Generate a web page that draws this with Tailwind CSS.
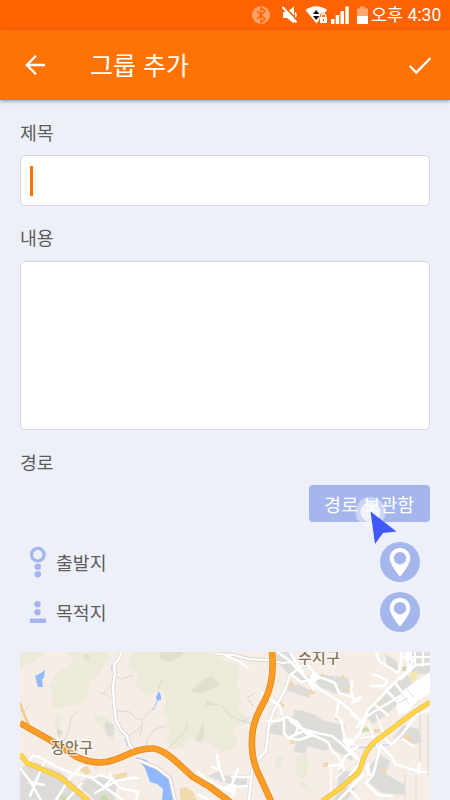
<!DOCTYPE html>
<html lang="ko">
<head>
<meta charset="utf-8">
<title>그룹 추가</title>
<script src="https://cdn.jsdelivr.net/npm/@tailwindcss/browser@4"></script>
</head>
<body class="w-[450px] h-[800px] overflow-hidden bg-[#edf0f9] font-['Noto_Sans_CJK_KR',sans-serif] text-[#5c5c5c]">
<div class="flex flex-col h-[800px]">
  <div class="h-[30px] shrink-0 bg-[#ff6200] flex items-center text-white">
    <svg class="w-[371px] h-[30px] shrink-0" viewBox="0 0 371 30" fill="none">
      <circle cx="261" cy="15" r="9" fill="#ffa167"/>
      <path d="M257 11l8 8-4 3.500V7.500l4 3.500-8 8" stroke="#ff6200" stroke-width="1.300"/>
      <path d="M283 12h4l7-5.500v17l-7-5.500h-4z" fill="#fff"/>
      <path d="M295 12.500q2 2.500 0 5" stroke="#fff" stroke-width="1.500"/>
      <path d="M284.500 6l13 15" stroke="#ff6200" stroke-width="1.800"/>
      <path d="M282.500 7l14 15.500" stroke="#fff" stroke-width="2"/>
      <path d="M305.500 10Q316 2.500 327 10L316.500 23.500z" fill="#fff"/>
      <path d="M313 14l3.200-4 3.200 4zM313 16l3.200 4 3.200-4z" fill="#111"/>
      <path d="M319.500 16.500l1-2.500q2.500-3 5 0l1.500 2.500v7h-7.500z" fill="#ff6200"/>
      <rect x="320" y="17" width="7" height="6" fill="#fff"/>
      <path d="M321.500 17v-2q2-2.500 4 0v2" stroke="#fff" stroke-width="1.300"/>
      <path d="M323 19h1v2h-1z" fill="#ff6200"/>
      <path d="M331 19h3.500v5H331zM335.700 15h3.500v9h-3.500zM340.500 11h3.500v13h-3.500zM345.300 6.500h3.500V24h-3.500z" fill="#fff"/>
      <path d="M357 8.500h3V6.500h5v2h3v8h-11z" fill="#ffa873"/>
      <path d="M357 16h11v8h-11z" fill="#fff"/>
    </svg>
    <span class="font-[Roboto,'Noto_Sans_CJK_KR',sans-serif] text-[17.500px] leading-[30px] whitespace-nowrap">오후 4:30</span>
  </div>
  <header class="h-[70px] shrink-0 bg-[#ff7305] flex items-center pl-[25px] pr-[18px] text-white shadow-[0_1px_4px_rgba(60,60,90,0.55)]">
    <svg class="w-5 h-5" viewBox="0 0 20 20" fill="none" stroke="#fff" stroke-width="2.300"><path d="M20 10H2M11 .8L1.800 10l9.200 9.200"/></svg>
    <h1 class="ml-[45px] mb-[2px] text-[25px] leading-[36px] flex-1">그룹 추가</h1>
    <svg class="w-6 h-5" viewBox="0 0 24 20" fill="none" stroke="#fff" stroke-width="2.300"><path d="M1.800 11l6.500 6.500L22.500 3"/></svg>
  </header>
  <main class="flex flex-col px-5 text-[18.300px] leading-[26px]">
    <label class="mt-[19px]">제목</label>
    <div class="mt-[10px] h-[51px] rounded-[5px] border border-[#d6d7dc] bg-white flex items-center pl-[9px]"><div class="w-[3px] h-[30px] bg-[#ff7305]"></div></div>
    <label class="mt-[18px]">내용</label>
    <div class="mt-[11px] h-[169px] rounded-[5px] border border-[#d6d7dc] bg-white"></div>
    <label class="mt-[19px]">경로</label>
    <div class="relative self-end mt-[10px] w-[121.500px] h-[37px] rounded-[4px] bg-[#a5b6ec] text-white text-[18.500px] flex items-center justify-center whitespace-nowrap">경로 보관함
      <svg class="absolute left-[46px] top-[11px] w-[44px] h-[50px]" viewBox="0 0 44 50">
        <circle cx="15.500" cy="16" r="15" fill="#fff" fill-opacity=".42"/>
        <circle cx="15.500" cy="16" r="10" fill="#fff" fill-opacity=".7"/>
        <path d="M15.500 15.500L41.500 35.500 28 37 20 48z" fill="#4059ff"/>
      </svg>
    </div>
    <div class="mt-[15px] flex items-center h-[50px] pl-[9px] pr-[10px]">
      <svg class="w-[18px] h-[50px]" viewBox="29 537 18 50" fill="#a5b6ec"><circle cx="37.800" cy="554.700" r="6.300" fill="none" stroke="#a5b6ec" stroke-width="3.200"/><circle cx="37.800" cy="566.700" r="3.200"/><circle cx="37.800" cy="574.200" r="3.300"/></svg>
      <span class="ml-[9px] flex-1">출발지</span>
      <svg class="w-10 h-10" viewBox="0 0 40 40"><circle cx="20" cy="20" r="20" fill="#a5b6ec"/><path fill="#fff" fill-rule="evenodd" d="M20 6c-6 0-10.300 4.500-10.300 10.300C9.700 22 17 31 20 34.500 23 31 30.300 22 30.300 16.300 30.300 10.500 26 6 20 6zm0 4a6.200 6.200 0 1 0 0 12.400A6.200 6.200 0 0 0 20 10z"/></svg>
    </div>
    <div class="flex items-center h-[50px] pl-[9px] pr-[10px]">
      <svg class="w-[18px] h-[50px]" viewBox="29 587 18 50" fill="#a5b6ec"><circle cx="37.500" cy="604.300" r="3.200"/><circle cx="37.500" cy="612.300" r="3.200"/><path d="M30 618.500h16v4.500H30z"/></svg>
      <span class="ml-[9px] flex-1">목적지</span>
      <svg class="w-10 h-10" viewBox="0 0 40 40"><circle cx="20" cy="20" r="20" fill="#a5b6ec"/><path fill="#fff" fill-rule="evenodd" d="M20 6c-6 0-10.300 4.500-10.300 10.300C9.700 22 17 31 20 34.500 23 31 30.300 22 30.300 16.300 30.300 10.500 26 6 20 6zm0 4a6.200 6.200 0 1 0 0 12.400A6.200 6.200 0 0 0 20 10z"/></svg>
    </div>
    <svg class="mt-[15px] w-[410px] h-[148px] shrink-0" viewBox="20 652 410 148" fill="none" stroke-linejoin="round">
      <rect x="20" y="652" width="410" height="148" fill="#f5ede6"/>
      <!-- woodland -->
      <g fill="#ecebd9">
        <path d="M20 652h26l-8 7-14 7-4 6zM65 652h42l4 4-7 9-7 12-6 5-3 10-8 13-15 1-14 3 2-14-4-8 8-15 13-6 3-9zM133 652h79l10 8 15 5 3 8-4 10 4 8 1 10-3 8 8 8 4 6-10 2-7 4 5 12-1 5-6 4-9 2-12-8-9-4-12-3-4 10-13 2-6-8 5-8-6-6 3-10-6-4 5-12-3-8-6-4-7 5-5 2-6-6-5-8 5-8-8-4-5-3zM57 712l5 5-1 8-5 4-2-7zM94 714l15 5 7 11-2 12-8-5-4-10-7-5zM275 758l8-3-2 15-6-2zM296 757l10-3 3 12-5 14-8-6zM298 780l8 3 10 13-15-8z"/>
      </g>
      <g fill="#e3dfcd"><path d="M190 692l13-12 8-4 9 9-17 8zM206 700l14 5-14 1zM195 740l9-18v14l-4 7zM84 654h5v6h-5zM160 652h24l-4 5-12 6-8-5z"/></g>
      <!-- built-up areas -->
      <g fill="#dedcd9">
        <path d="M20 768l15-6 25 10 18 15 5 13H20zM105 721l9 4v9l-5 3-4-6zM57 728l6 4-3 6-3-4zM78 784l11-7 16-1 12 4-2 20H94zM208 776l11-5 4 5 12-1 12 0v12l-10-1-17-5zM265 733l10-11 18-6 8-6 15 5 13 10 7 21-12 5-16-5-3 8-12-3 3-9-10-6-7-1zM285 687l14-3 13 8-3 6-25-9zM310 671l14 4 24 3 4 14-12 3-20-8zM293 709l32 12 20 4-2 13 12 13-3 10-24-15-28-8zM365 716l20-24 22-18 7 11-10 14-17 15-14 10zM340 770l16 2-5 11-15 9zM367 770l12-16 11 7-4 13 19 11v10l-22-2-14-10zM270 652h19l7 14 20 16-8 2-20-10zM405 652h25v22h-17zM385 654l12 7 1 10-10-2zM393 738l10-13 15 4 4 13-11 3-10-6zM343 787l13 1-9 12h-14z"/>
      </g>
      <path fill="#f0d9ae" d="M113 775l14-3v5l-11 3zM79 769l8-3 4 6-5 4zM180 788l6-1 7 5 4 8h-17zM280 702l5 2-2 4-4-1zM288 683l4-2 2 4-5 2zM347 686l6 3-3 3-4-2zM341 676l3-1v4l-3 1zM335 716h4v4h-4zM290 740h5v4h-5zM323 763l5-1v5h-5zM382 768l5 2-2 4-4-3zM404 734l7 3-1 5-5-2zM374 703l5-2 1 4-5 1zM374 729h6v4h-6zM310 689h5v5h-5zM340 790l6-1-1 5-5 1zM28 770l4 2-2 2-3-1z"/>
      <path fill="#c9dba8" d="M100 797l5-3 4 6h-8zM60 795l7 2v3h-6zM362 728l5-1 3 4-8 1zM403 666l3 1v4h-4zM318 676l6-2v5zM396 722l5-3 2 3-4 3z"/>
      <path fill="#f0e8b2" d="M410 673l7-2v8l-7 3z"/>
      <!-- water -->
      <g fill="#8fb8ff"><path d="M35 676l6-3 4-3-1 7-2 3 1 7h-5zM159 691l2 5v4l-4 1-1-4zM136 757l10 3 11 8 13 10 3 22h-11l1-11-6-5-7-2-5-14z"/></g>
      <path stroke="#b3cbf7" stroke-width="1.200" d="M157 701l-4 9M112 665v6M125 738l3 9M355 747l14 1 8-3h13M278 663h12"/>
      <!-- footpaths -->
      <g stroke="#dcd7d1" stroke-width="1">
        <path d="M77 711l-6 7-2 13-5 10-12 8M115 675l6 4 13-4M112 684l-7 8-3 3M100 692l10 5M162 679l-4 12M155 706l-13 14-7-2-5-6-10-1-4 2M142 720v6l-14 11M165 726l-10 3-8 10-1 9M142 726l-2 10M187 724l-1 6-15 16-5 4M223 706l7 10 12 5 9 2M255 693l-8 5 6 8M250 717l-8 5M33 702l-8 8-5 2M96 770v-9"/>
        <path d="M24 774l20 26M35 766l25 34M49 770l20 27M20 784l22-18M22 794l30-24M31 799l30-23M46 800l25-19M60 800l17-12M81 793l17-12M88 780l18 16"/>
      </g>
      <!-- road casings -->
      <g stroke="#ddd7d0" stroke-width="4">
        <path d="M121 652l-1 5-6 8 1 9-2 12 1 17 2 17 5 10 6 6 3 10 6 6M138 760l19 8 13 10 5 22"/>
        <path d="M218 654l16 1 14 4 18 1 17 3 16-2M303 665l-13 10-5 15-11 20-5 14-3 27-8 8-6 12-3 29"/>
      </g>
      <!-- streets -->
      <g stroke="#fff" stroke-width="2.600" stroke-linecap="round">
        <path stroke-width="2.300" d="M121 652l-1 5-6 8 1 9-2 12 1 17 2 17 5 10 6 6 3 10 6 6"/>
        <path d="M303 665l-13 10-5 15-11 20-5 14-3 27-8 8-6 12-3 29"/>
        <path stroke-width="1.900" d="M218 654l16 1 14 4 18 1 17 3 16-2 8-7M222 654l8 3 10 5 8 6M138 760l19 8 13 10 5 22"/>
        <path stroke-width="2.400" d="M20 768l10 13 11 19M30 782l14 3M28 763l5-8 12 5 10 6 16 7 10 2 12 3 7-3 12 4 8 9 18 4-2 9M73 773l-17 27M82 766l-10 10M45 760l-15 36M37 756l8 4M110 773l1 7-6 6M93 779l30 21M95 793l13-7 8-5 16-3 6 0M67 800l15-17"/>
        <path d="M217 755l2 12 5 13M212 767l7 3M198 772l8 7 17 9 9-1 15-1M232 784l2 10-7 6M232 784l6-15M232 777h17M223 788l9 4M199 795l10 5"/>
        <path d="M262 693l8 6 10 7 2 8M267 721h11l9-4 10 5 10 12M284 721v12l4 5 7-3 4-9M288 738l11 2 14-5M277 652l12 8 15 16 15 13 20 12 11 9 12 13M290 652l13 21 11 17M291 674l10 8 16-4-8-12M309 684l11-7 15 6 4 10 13 4 6 4 3-4M353 698l-2-8 1-8M339 701l-3 15 5 4 4 20M352 703l8-6M290 721l12 8 20 5 10 2 10 8 9 10 11 8M290 737l14-6 24 11 4 9 6 5 6 12M358 746l-13 11-6 12M343 740l16 20M329 766l14-2M350 775l10-12M349 745l11-12 3-9 5-14 11-11 19-20 9-7 8-15M357 727l6-8 12-8 25-15M381 745l-8 30-7 8 12 12 14 1M380 745l12 12 3 7 25 8h10M419 763v10M386 690l12 12 6 10M395 683l14 18M382 735l9 10 12-12 14-19 13-4M403 739l10 7M363 775l-24 25M350 790l10 10M375 705l13 10M376 652l3 9 19 12 3-10v-11M370 686h15l2-6-9-4-5-1M401 679l14-14 15-1"/>
        <path stroke-width="2" d="M415 652v14M423 652v14M402 657h28M408 652v14"/>
        <path stroke-width="1.500" d="M331 766v30M345 770l-10 8M360 738l15-2M350 714l14 8M368 723l10 25M376 715l8 18"/>
      </g>
      <path stroke="#e0dbd5" stroke-width="1.200" d="M420 707v55M428 715v60M405 774v26M416 775v25"/>
      <path fill="#fff" d="M396 707l2-7 6-10 8-6 6-4 12-8v22l-12 6-12 13-7 2zM343 737l9 2 4 6-10-1zM309 676l6-4 5 3-6 8zM405 652h7v9h-7zM228 784h8v7h-8zM366 765l3-3 2 14-4 1z"/>
      <path stroke="#e3dfdb" stroke-width="1" d="M402 695l7 9M407 689l7 9M398 703l10-5"/>
      <!-- main roads -->
      <g stroke="#ecb651" stroke-width="5"><path d="M430 702l-17 11-40 30q-8 9-11 20t-8 13q-12 12-32 25M20 754l7 9 33 14 29 24"/></g>
      <g stroke="#ffd644" stroke-width="3.800"><path d="M430 702l-17 11-40 30q-8 9-11 20t-8 13q-12 12-32 25M20 754l7 9 33 14 29 24"/></g>
      <path d="M20 703q4 12 8 20-2 5-7 3" stroke="#f0cc80" stroke-width="2.500"/>
      <path d="M20 723L50 740 77 757Q92 764 106 762C124 759 134 748 153 748.500 166 750 176 762 193 777L210 787 230 802M272 652Q275 680 265 700C257 714 252 725 252 741Q251 760 260 777L271 801" stroke="#e18b25" stroke-width="6.600"/>
      <path d="M20 723L50 740 77 757Q92 764 106 762C124 759 134 748 153 748.500 166 750 176 762 193 777L210 787 230 802M272 652Q275 680 265 700C257 714 252 725 252 741Q251 760 260 777L271 801" stroke="#ff9c24" stroke-width="4.800"/>
      <g fill="#857459" stroke="#fff" stroke-opacity=".75" stroke-width="2.500" paint-order="stroke" font-size="15" font-weight="500">
        <text x="51" y="752.500" textLength="42">장안구</text>
        <text x="298" y="663" textLength="42">수지구</text>
      </g>
    </svg>
  </main>
</div>
</body>
</html>
